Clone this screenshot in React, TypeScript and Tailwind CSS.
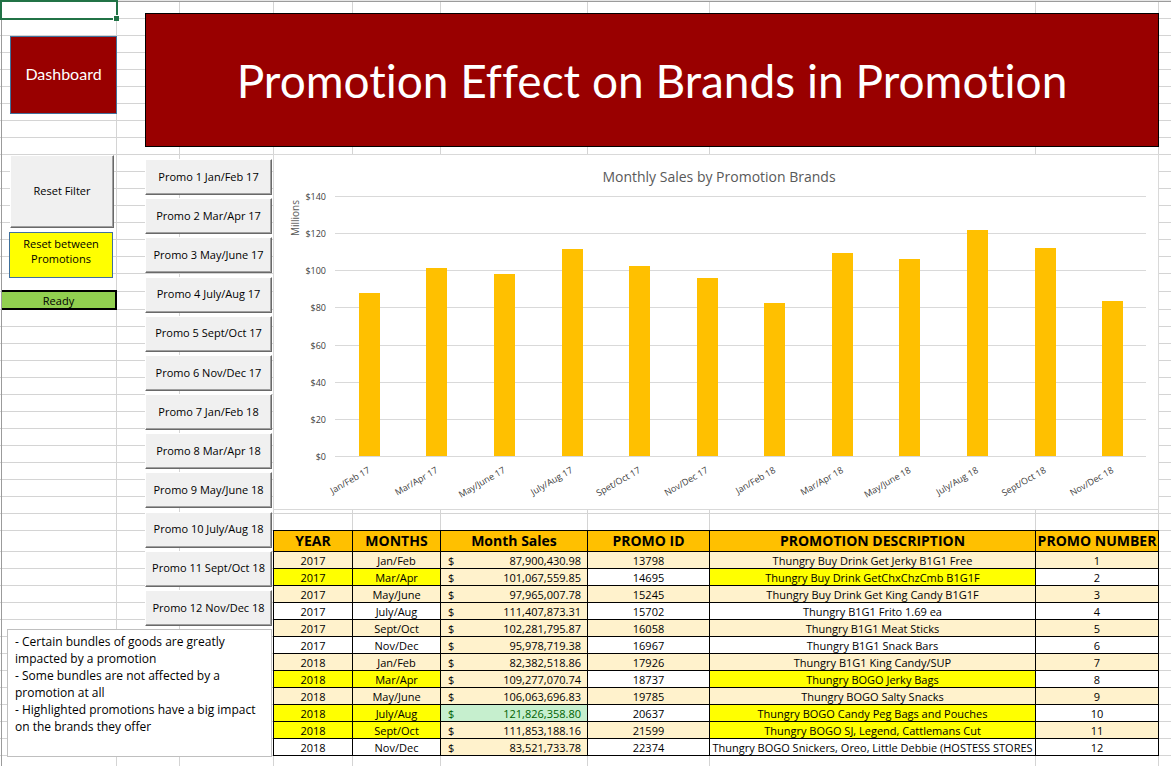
import React from "react";

type Highlight = "none" | "strong" | "best";

interface PromoRow {
  year: number;
  months: string;
  sales: number;
  id: number;
  description: string;
  highlight: Highlight;
}

const ROWS: PromoRow[] = [
  { year: 2017, months: "Jan/Feb", sales: 87900430.98, id: 13798, description: "Thungry Buy Drink Get Jerky B1G1 Free", highlight: "none" },
  { year: 2017, months: "Mar/Apr", sales: 101067559.85, id: 14695, description: "Thungry Buy Drink GetChxChzCmb B1G1F", highlight: "strong" },
  { year: 2017, months: "May/June", sales: 97965007.78, id: 15245, description: "Thungry Buy Drink Get King Candy B1G1F", highlight: "none" },
  { year: 2017, months: "July/Aug", sales: 111407873.31, id: 15702, description: "Thungry B1G1 Frito 1.69 ea", highlight: "none" },
  { year: 2017, months: "Sept/Oct", sales: 102281795.87, id: 16058, description: "Thungry B1G1 Meat Sticks", highlight: "none" },
  { year: 2017, months: "Nov/Dec", sales: 95978719.38, id: 16967, description: "Thungry B1G1 Snack Bars", highlight: "none" },
  { year: 2018, months: "Jan/Feb", sales: 82382518.86, id: 17926, description: "Thungry B1G1 King Candy/SUP", highlight: "none" },
  { year: 2018, months: "Mar/Apr", sales: 109277070.74, id: 18737, description: "Thungry BOGO Jerky Bags", highlight: "strong" },
  { year: 2018, months: "May/June", sales: 106063696.83, id: 19785, description: "Thungry BOGO Salty Snacks", highlight: "none" },
  { year: 2018, months: "July/Aug", sales: 121826358.8, id: 20637, description: "Thungry BOGO Candy Peg Bags and Pouches", highlight: "best" },
  { year: 2018, months: "Sept/Oct", sales: 111853188.16, id: 21599, description: "Thungry BOGO SJ, Legend, Cattlemans Cut", highlight: "strong" },
  { year: 2018, months: "Nov/Dec", sales: 83521733.78, id: 22374, description: "Thungry BOGO Snickers, Oreo, Little Debbie (HOSTESS STORES", highlight: "none" },
];

const AXIS_LABELS = [
  "Jan/Feb 17", "Mar/Apr 17", "May/June 17", "July/Aug 17", "Spet/Oct 17", "Nov/Dec 17",
  "Jan/Feb 18", "Mar/Apr 18", "May/June 18", "July/Aug 18", "Sept/Oct 18", "Nov/Dec 18",
];

const PROMOS = [
  "Promo 1 Jan/Feb 17", "Promo 2 Mar/Apr 17", "Promo 3 May/June 17", "Promo 4 July/Aug 17",
  "Promo 5 Sept/Oct 17", "Promo 6 Nov/Dec 17", "Promo 7 Jan/Feb 18", "Promo 8 Mar/Apr 18",
  "Promo 9 May/June 18", "Promo 10 July/Aug 18", "Promo 11 Sept/Oct 18", "Promo 12 Nov/Dec 18",
];

const RAISED =
  "border border-t-white border-l-white border-r-[#696969] border-b-[#696969] bg-[#f0f0f0] text-black shadow-[inset_-1px_-1px_0_#a0a0a0]";

function times(n: number) {
  return Array.from({ length: n }, (_, i) => i);
}

/* Worksheet cell lines, drawn beneath everything else */
function SheetLines() {
  const row = "shrink-0 border-b border-[#d4d4d4]";
  const col = "shrink-0 border-r border-[#d4d4d4]";
  return (
    <>
      <div aria-hidden className="col-start-1 row-start-1 flex h-0 min-h-full flex-col overflow-hidden">
        <div className="h-[2px] shrink-0 border-b border-[#9b9b9b] bg-[#e6e6e6]" />
        {times(16).map((i) => <div key={i} className={`h-[17px] ${row}`} />)}
        {times(2).map((i) => <div key={i} className={`h-[18px] ${row}`} />)}
        {times(13).map((i) => <div key={i} className={`h-[17px] ${row}`} />)}
        <div className={`h-[21px] ${row}`} />
        {times(12).map((i) => <div key={i} className={`h-[17px] ${row}`} />)}
      </div>
      <div aria-hidden className="col-start-1 row-start-1 flex pt-[2px]">
        <div className="w-[2px] shrink-0 border-r border-[#9b9b9b]" />
        <div className={`w-[115px] ${col}`} />
        <div className={`w-[63px] ${col}`} />
        <div className={`w-[94px] ${col}`} />
        <div className={`w-[79px] ${col}`} />
        <div className={`w-[88px] ${col}`} />
        <div className={`w-[147px] ${col}`} />
        <div className={`w-[122px] ${col}`} />
        <div className={`flex-1 ${col}`} />
        <div className={`w-[123px] ${col}`} />
        <div className="w-3 shrink-0" />
      </div>
    </>
  );
}

function SalesChart() {
  const left = 61;
  const right = 872;
  const zero = 301;
  const top = 41;
  const step = (right - left) / ROWS.length;
  const y = (millions: number) => Math.round(zero - (millions / 140) * (zero - top));
  return (
    <svg
      viewBox="0 0 884 354"
      className="block w-full border border-[#d9d9d9] bg-white"
      role="img"
      aria-label="Monthly Sales by Promotion Brands"
    >
      <text x="445" y="27" textAnchor="middle" fontSize="14" fill="#595959">Monthly Sales by Promotion Brands</text>
      <text transform="translate(25 63) rotate(-90)" textAnchor="middle" fontSize="10" fill="#595959">Millions</text>
      {times(8).map((i) => (
        <g key={i}>
          <rect x={left} y={y(i * 20)} width={right - left} height="1" fill="#d9d9d9" />
          <text x="52" y={y(i * 20) + 4} textAnchor="end" fontSize="9" fill="#404040">${i * 20}</text>
        </g>
      ))}
      {ROWS.map((r, i) => {
        const center = left + step * (i + 0.5);
        const barTop = y(r.sales / 1e6);
        return (
          <g key={r.id}>
            <rect x={Math.round(center - 10)} y={barTop} width="21" height={zero - barTop} fill="#ffc000" />
            <text
              transform={`translate(${center + 2} 317) rotate(-30)`}
              textAnchor="end"
              fontSize="9"
              fill="#404040"
            >
              {AXIS_LABELS[i]}
            </text>
          </g>
        );
      })}
    </svg>
  );
}

function PromoTable() {
  const head = "border border-black p-0 text-sm leading-5 font-bold whitespace-nowrap";
  const cell = "border border-black px-0 pt-px pb-0";
  return (
    <table className="w-full table-fixed border-collapse text-center text-[11px] leading-[15px] text-black">
      <colgroup>
        <col className="w-[79px]" />
        <col className="w-[88px]" />
        <col className="w-[147px]" />
        <col className="w-[122px]" />
        <col />
        <col className="w-[123px]" />
      </colgroup>
      <thead>
        <tr className="bg-[#ffc000]">
          <th className={head}>YEAR</th>
          <th className={head}>MONTHS</th>
          <th className={head}>Month Sales</th>
          <th className={head}>PROMO ID</th>
          <th className={head}>PROMOTION DESCRIPTION</th>
          <th className={head}>PROMO NUMBER</th>
        </tr>
      </thead>
      <tbody>
        {ROWS.map((r, i) => {
          const band = i % 2 === 0 ? "bg-[#fff2cc]" : "bg-white";
          const marked = r.highlight === "none" ? band : "bg-[#ffff00]";
          const sales = r.highlight === "best" ? "bg-[#c6efce] text-[#006100]" : "bg-[#fff2cc]";
          return (
            <tr key={r.id}>
              <td className={`${cell} ${marked}`}>{r.year}</td>
              <td className={`${cell} ${marked}`}>{r.months}</td>
              <td className={`${cell} ${sales}`}>
                <div className="flex justify-between pr-1.5 pl-[7px]">
                  <span>$</span>
                  <span>{r.sales.toLocaleString("en-US", { minimumFractionDigits: 2 })}</span>
                </div>
              </td>
              <td className={`${cell} ${band}`}>{r.id}</td>
              <td className={`${cell} ${marked}`}>
                <div className="flex justify-center overflow-hidden whitespace-nowrap">
                  <span className="shrink-0">{r.description}</span>
                </div>
              </td>
              <td className={`${cell} ${band}`}>{i + 1}</td>
            </tr>
          );
        })}
      </tbody>
    </table>
  );
}

export default function App() {
  return (
    <div className="grid min-h-screen grid-cols-1 bg-white font-['Open_Sans',sans-serif] [font-variant-ligatures:none]">
      <SheetLines />

      <main className="relative col-start-1 row-start-1 grid grid-cols-[145px_128px_1fr] grid-rows-[auto_auto_1fr] pr-3">
        <div className="absolute top-0 left-0 h-5 w-[118px] border-2 border-[#217346] bg-white">
          <span className="absolute -right-[3px] -bottom-[3px] size-[6px] border-t border-l border-white bg-[#217346]" />
        </div>

        <div className="pt-9 pl-2.5">
          <button type="button" className="h-[78px] w-[107px] border border-[#41719c] bg-[#990000] pb-0.5 font-['Lato',sans-serif] text-base text-white">
            Dashboard
          </button>
        </div>
        <h1 className="col-span-2 mt-[13px] flex h-[134px] items-center justify-center border border-black bg-[#990000] font-['Lato',sans-serif] text-[46px] whitespace-nowrap text-white">
          Promotion Effect on Brands in Promotion
        </h1>

        <div className="flex flex-col items-start pt-2 text-[11px]">
          <button type="button" className={`ml-2.5 h-[73px] w-[104px] ${RAISED}`}>Reset Filter</button>
          <button type="button" className="mt-1 ml-[9px] h-[46px] w-[104px] border border-[#41719c] bg-[#ffff00] px-2 pb-2 leading-[15px] text-black">
            Reset between Promotions
          </button>
          <div className="mt-3 ml-0.5 h-5 w-[115px] border-2 border-l-0 border-black bg-[#92d050] text-center leading-[18px]">
            Ready
          </div>
        </div>

        <div className="mt-3 flex h-[467px] flex-col justify-between text-[11px]">
          {PROMOS.map((p) => (
            <button key={p} type="button" className={`h-9 w-[127px] whitespace-nowrap ${RAISED}`}>{p}</button>
          ))}
        </div>

        <div className="row-span-2 flex flex-col gap-5 pt-[7px]">
          <SalesChart />
          <PromoTable />
        </div>

        <div className="col-span-2 mt-[3px] mr-px mb-[10px] ml-[7px] h-[128px] self-start border border-[#bfbfbf] bg-white px-[7px] pt-[3px] text-xs leading-[17px] text-black">
          <p>- Certain bundles of goods are greatly<br />impacted by a promotion</p>
          <p>- Some bundles are not affected by a<br />promotion at all</p>
          <p>- Highlighted promotions have a big impact<br />on the brands they offer</p>
        </div>
      </main>
    </div>
  );
}
